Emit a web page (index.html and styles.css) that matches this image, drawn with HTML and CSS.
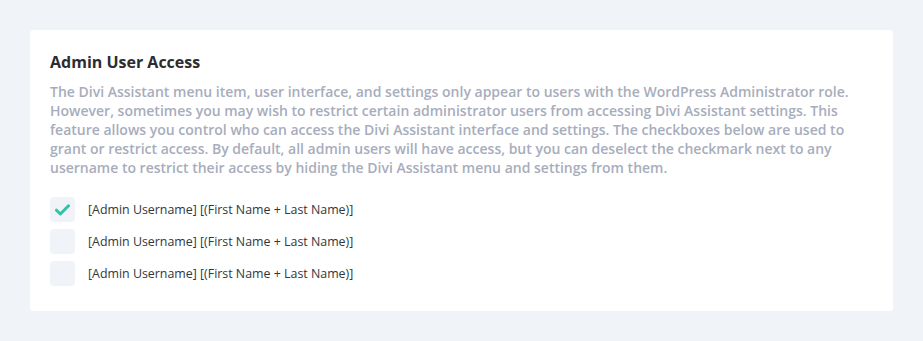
FILE: index.html
```html
<!DOCTYPE html>
<html>
<head>
<meta charset="utf-8">
<link rel="stylesheet" href="styles.css">
</head>
<body>
<div class="page">
  <section class="card">
    <h2 class="title">Admin User Access</h2>
    <p class="desc">The Divi Assistant menu item, user interface, and settings only appear to users with the WordPress Administrator role. However, sometimes you may wish to restrict certain administrator users from accessing Divi Assistant settings. This feature allows you control who can access the Divi Assistant interface and settings. The checkboxes below are used to grant or restrict access. By default, all admin users will have access, but you can deselect the checkmark next to any username to restrict their access by hiding the Divi Assistant menu and settings from them.</p>
    <ul class="users">
      <li class="user">
        <span class="box checked">
          <svg width="15" height="12" viewBox="0 0 15 12"><path d="M1.5 6.2 L5.4 10 L13.5 1.8" fill="none" stroke="#2ec4a5" stroke-width="3" stroke-linecap="round" stroke-linejoin="round"/></svg>
        </span>
        <span class="label">[Admin Username] [(First Name + Last Name)]</span>
      </li>
      <li class="user">
        <span class="box"></span>
        <span class="label">[Admin Username] [(First Name + Last Name)]</span>
      </li>
      <li class="user">
        <span class="box"></span>
        <span class="label">[Admin Username] [(First Name + Last Name)]</span>
      </li>
    </ul>
  </section>
</div>
</body>
</html>
```

FILE: styles.css
```css
* { box-sizing: border-box; }
html, body { margin: 0; padding: 0; }
body {
  background: #f0f3f8;
  font-family: "Open Sans", "Noto Sans", sans-serif;
  width: 923px;
  height: 341px;
  overflow: hidden;
}
.page {
  padding: 30px 30px 0 30px;
}
.card {
  background: #ffffff;
  border-radius: 3px;
  padding: 21px 20px 23px 20px;
  width: 863px;
  height: 281px;
}
.title {
  margin: 0;
  font-size: 16px;
  font-weight: 700;
  line-height: 22px;
  color: #2b2d33;
}
.desc {
  margin: 9px 0 0 0;
  font-size: 14px;
  line-height: 19px;
  color: #a7adbc;
  font-weight: 600;
}
.users {
  list-style: none;
  margin: 20px 0 0 0;
  padding: 0;
  display: flex;
  flex-direction: column;
  gap: 7px;
}
.user {
  display: flex;
  align-items: center;
  gap: 13px;
  height: 25px;
}
.box {
  width: 25px;
  height: 25px;
  border-radius: 4px;
  background: #f0f3f8;
  display: flex;
  align-items: center;
  justify-content: center;
}
.box svg { display: block; }
.label {
  font-size: 12.4px;
  color: #32373c;
  line-height: 18px;
}
```
